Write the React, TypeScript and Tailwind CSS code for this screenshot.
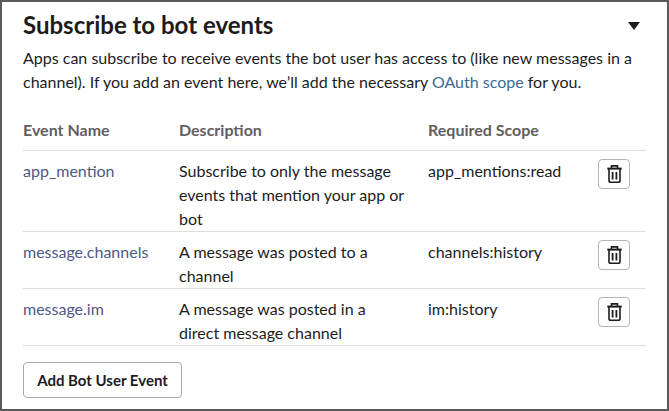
import React from 'react';

const rows = [
    { name: 'app_mention', desc: 'Subscribe to only the message events that mention your app or bot', scope: 'app_mentions:read', h: 'h-[81px]' },
    { name: 'message.channels', desc: 'A message was posted to a channel', scope: 'channels:history', h: 'h-[57px]' },
    { name: 'message.im', desc: 'A message was posted in a direct message channel', scope: 'im:history', h: 'h-[57px]' },
];

function TrashIcon() {
    return (
        <svg width="15" height="18" viewBox="0 0 15 18" fill="none" stroke="#1d1c1d" strokeWidth="1.6">
            <path d="M4.5 3V.9h6V3" />
            <path d="M.3 3.6h14.4" strokeWidth="2" />
            <path d="M2 4v11.4c0 1 .7 1.8 1.7 1.8h7.6c1 0 1.7-.8 1.7-1.8V4" />
            <path d="M5.6 7v7.5M9.4 7v7.5" strokeWidth="1.8" />
        </svg>
    );
}

function App() {
    return (
        <div className="w-[669px] h-[411px] overflow-hidden bg-white border-2 border-[#5a5a5a] pl-[21px] pr-[21px] font-['Lato','Noto_Sans',sans-serif] text-[#1d1c1d]">
            <div className="flex items-center justify-between h-[44px] pt-[1px]">
                <h2 className="text-[24px] font-bold leading-[30px]">Subscribe to bot events</h2>
                <div className="mr-[6px] mt-[2px] w-0 h-0 border-x-[6.5px] border-x-transparent border-t-[8px] border-t-[#1d1c1d]" />
            </div>
            <p className="text-[16px] leading-[24px] h-[48px] whitespace-nowrap">
                Apps can subscribe to receive events the bot user has access to (like new messages in a
                <br />
                channel). If you add an event here, we’ll add the necessary <span className="text-[#3c6a94]">OAuth scope</span> for you.
            </p>
            <div className="flex items-center h-[57px] pt-[15px] text-[16px] font-bold text-[#616061] border-b border-[#dddddd]">
                <div className="w-[156px]">Event Name</div>
                <div className="w-[249px]">Description</div>
                <div>Required Scope</div>
            </div>
            {rows.map((row) => (
                <div key={row.name} className={`flex ${row.h} pt-[8px] text-[16px] leading-[24px] border-b border-[#dddddd]`}>
                    <div className="w-[156px] text-[#4d5a85]">{row.name}</div>
                    <div className="w-[249px] pr-[20px] leading-[24px]">{row.desc}</div>
                    <div className="w-[170px]">{row.scope}</div>
                    <button className="w-[32px] h-[30px] flex items-center justify-center rounded border border-[#b5b5b5] bg-white">
                        <TrashIcon />
                    </button>
                </div>
            ))}
            <button className="mt-[16px] w-[159px] h-[36px] rounded border border-[#a8a8a8] bg-white text-[15px] font-bold">
                Add Bot User Event
            </button>
        </div>
    );
}

export default App;
